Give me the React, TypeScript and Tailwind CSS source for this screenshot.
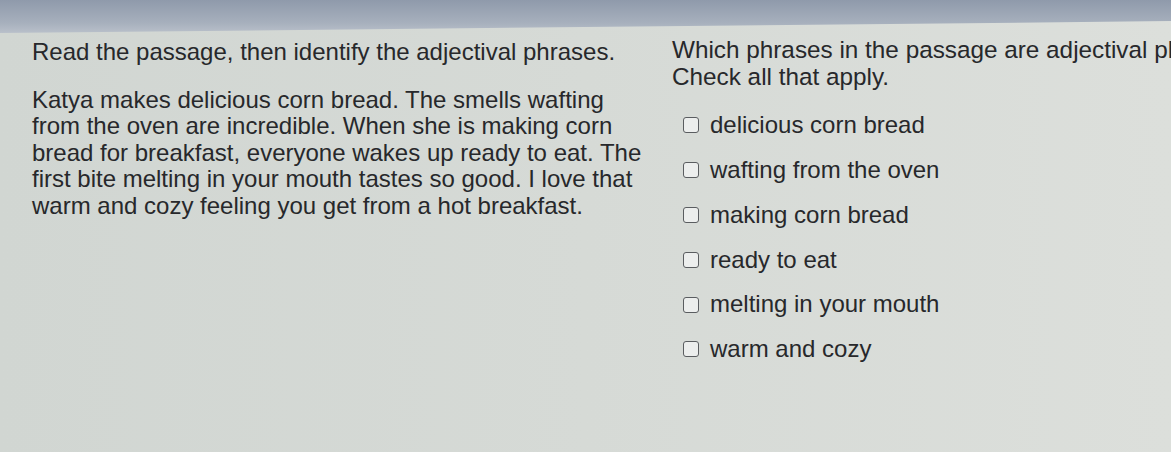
import React from "react";

const passage = [
  "Katya makes delicious corn bread. The smells wafting",
  "from the oven are incredible. When she is making corn",
  "bread for breakfast, everyone wakes up ready to eat. The",
  "first bite melting in your mouth tastes so good. I love that",
  "warm and cozy feeling you get from a hot breakfast.",
];

const options = [
  "delicious corn bread",
  "wafting from the oven",
  "making corn bread",
  "ready to eat",
  "melting in your mouth",
  "warm and cozy",
];

const Option = ({ label }: { label: string }) => {
  return (
    <label className="flex items-center h-[44.8px] pl-[11px] cursor-pointer">
      <span className="w-[16px] h-[16px] rounded-[3px] border-[1.5px] border-[#5a5d60] bg-[#eceeed] shrink-0" />
      <span className="ml-[11px]">{label}</span>
    </label>
  );
};

const App = () => {
  return (
    <div className="w-[1171px] h-[452px] overflow-hidden bg-[linear-gradient(90deg,#d1d6d2_0%,#d6dad6_50%,#dcdfdb_100%)] text-[#27282b] text-[24px] leading-[26.5px] font-['Liberation_Sans',Arial,sans-serif]">
      {/* window chrome strip, slightly slanted */}
      <div className="h-[33px] bg-[linear-gradient(180deg,#8f9aab_0%,#a7b0bd_70%,#b9c0ca_100%)] [clip-path:polygon(0_0,100%_0,100%_64%,0_100%)]" />
      <div className="flex px-[32px] pt-[6px]">
        <div className="w-[640px] shrink-0">
          <h1>Read the passage, then identify the adjectival phrases.</h1>
          <p className="mt-[21px]">
            {passage.map((line) => (
              <span key={line} className="block whitespace-nowrap">
                {line}
              </span>
            ))}
          </p>
        </div>
        <div className="flex-1 min-w-0 whitespace-nowrap -mt-[2px]">
          <p className="text-[24.3px]">Which phrases in the passage are adjectival phrases?</p>
          <p className="text-[24.3px]">Check all that apply.</p>
          <div className="mt-[13px] flex flex-col">
            {options.map((o) => (
              <Option key={o} label={o} />
            ))}
          </div>
        </div>
      </div>
    </div>
  );
};

export default App;
